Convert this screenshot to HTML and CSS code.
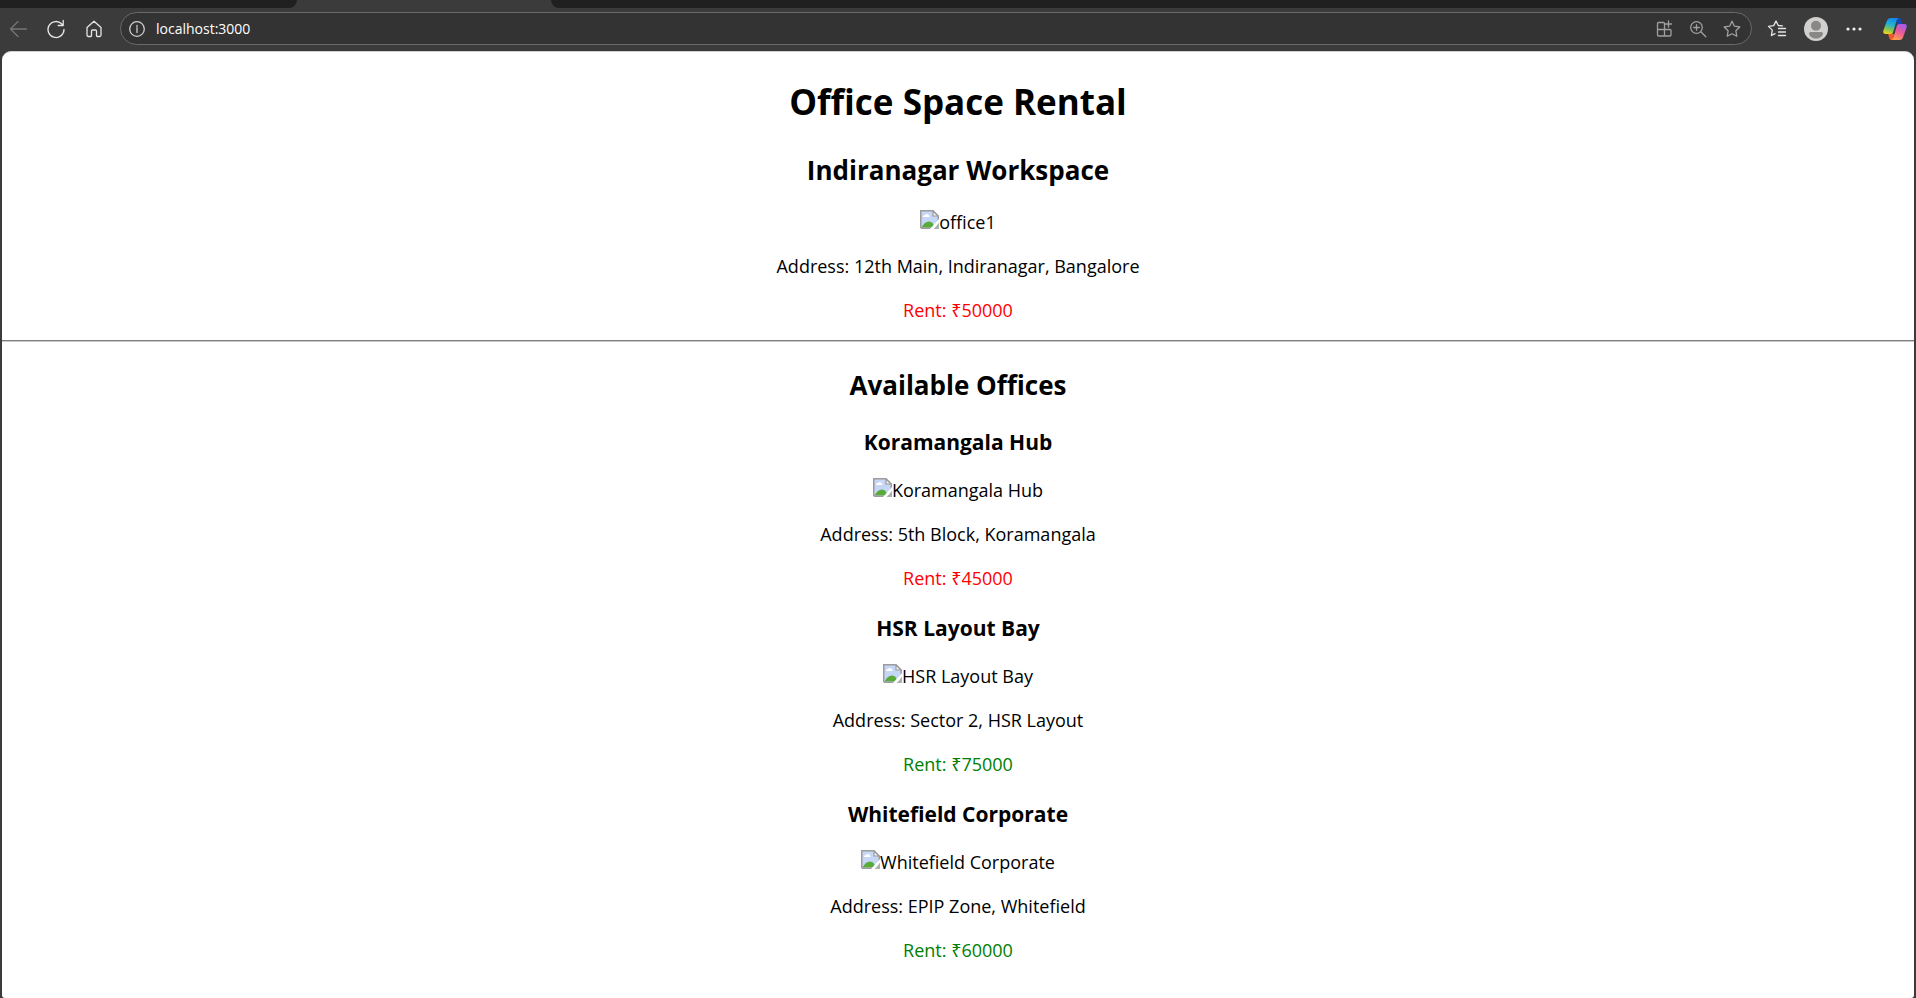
FILE: index.html
```html
<!DOCTYPE html>
<html lang="en">
<head>
<meta charset="utf-8">
<title>Office Space Rental</title>
<link rel="stylesheet" href="styles.css">
</head>
<body>
<svg width="0" height="0" class="defs" aria-hidden="true">
  <symbol id="broken" viewBox="0 0 19 19">
    <path d="M1 1h12l5 5v12H1z" fill="#c6d6f6"/>
    <path d="M3 6.500a2 2 0 0 1 2-1.500a2.300 2.300 0 0 1 4 .5a1.500 1.500 0 0 1 .5 1.500H3z" fill="#fff"/>
    <path d="M1.500 17.500c2-4 4.500-6 7.500-6s4.500 2 5.500 6z" fill="#57ab38"/>
    <path d="M.75 18V.75H13l5.250 5.250V18.250H.75" fill="none" stroke="#9c9c9c" stroke-width="1.500"/>
    <path d="M13 1v5h5z" fill="#f4f4f4" stroke="#9c9c9c" stroke-width="1.200"/>
    <path d="M19.500 8.500v4l-6 7H9.500z" fill="#fff"/>
    <path d="M19 13v6h-5z" fill="#a8b4a8"/>
  </symbol>
</svg>
<header class="browser">
  <div class="tabs"><div class="tab-side tab-left"></div><div class="tab-active"></div><div class="tab-side tab-right"></div></div>
  <nav class="toolbar" aria-label="Browser">
    <button class="tool dim" aria-label="Back"><svg width="20" height="20" viewBox="0 0 20 20"><path d="M18.500 10H2.500M10 2.500L2.500 10l7.500 7.500"/></svg></button>
    <button class="tool" aria-label="Refresh"><svg width="20" height="20" viewBox="0 0 20 20"><path d="M18 10.500A8 8 0 1 1 15.800 5L17 6.200M17.200 1.500v5h-5"/></svg></button>
    <button class="tool" aria-label="Home"><svg width="20" height="20" viewBox="0 0 20 20"><path d="M3 8.500L10 2.200l7 6.300V16q0 1.500-1.500 1.500h-2.200q-.8 0-.8-.8V12q0-1-1-1h-3q-1 0-1 1v4.700q0 .8-.8.8H4.500Q3 17.500 3 16z"/></svg></button>
    <form class="address">
      <button type="button" class="tool info" aria-label="Site information"><svg width="18" height="18" viewBox="0 0 18 18"><circle cx="9" cy="9" r="7.300"/><path d="M9 8v4.500M9 5.300v1.400"/></svg></button>
      <input class="url" type="text" aria-label="Address" value="localhost:3000">
      <button type="button" class="tool muted" aria-label="Apps"><svg width="18" height="18" viewBox="0 0 18 18"><path d="M8.500 2.500H3.500q-1 0-1 1V15q0 1 1 1H15q1 0 1-1v-4.500q0-1-1-1H2.500M8.500 2.500q1 0 1 1V16M13.500 1v6M10.500 4h6"/></svg></button>
      <button type="button" class="tool muted" aria-label="Zoom"><svg width="18" height="18" viewBox="0 0 18 18"><circle cx="7.500" cy="7.500" r="5.800"/><path d="M11.800 11.800L16.800 16.800M7.500 4.700v5.600M4.700 7.500h5.600"/></svg></button>
      <button type="button" class="tool muted" aria-label="Add to favorites"><svg width="18" height="18" viewBox="0 0 18 18"><path d="M9 1.200l2.400 5 5.400.8-3.900 3.800.9 5.500L9 13.700l-4.800 2.600.9-5.500L1.200 7l5.400-.8z"/></svg></button>
    </form>
    <div class="actions">
      <button class="tool" aria-label="Favorites"><svg width="20" height="20" viewBox="0 0 20 20"><path d="M15.500 6.800l-4.200-.3L9 2 6.700 6.600l-5.200.8 3.800 3.700-.9 5.400 3.600-1.900M11.500 9.500h7M11.500 13h7M11.500 16.500h7"/></svg></button>
      <button class="tool" aria-label="Profile"><svg class="plain" width="24" height="24" viewBox="0 0 24 24"><circle cx="12" cy="12" r="12" fill="#d2d0ce"/><circle cx="12" cy="8.800" r="5" fill="#8a8886"/><path d="M5 16.500q0-1.500 1.500-1.500h11q1.500 0 1.500 1.500c-.5 3.500-3.500 5-7 5s-6.500-1.500-7-5z" fill="#8a8886"/></svg></button>
      <button class="tool" aria-label="More"><svg class="plain" width="18" height="18" viewBox="0 0 18 18" fill="#eee"><circle cx="3" cy="9" r="1.600"/><circle cx="9" cy="9" r="1.600"/><circle cx="15" cy="9" r="1.600"/></svg></button>
      <button class="tool copilot" aria-label="Copilot"><svg class="plain" width="24" height="24" viewBox="0 0 24 24">
        <defs>
          <linearGradient id="ca" x1="0.600" y1="0" x2="0.300" y2="1"><stop offset="0" stop-color="#1686e8"/><stop offset=".4" stop-color="#20b0d8"/><stop offset=".7" stop-color="#7cc45a"/><stop offset="1" stop-color="#f0d020"/></linearGradient>
          <linearGradient id="cb" x1="0.700" y1="0" x2="0.300" y2="1"><stop offset="0" stop-color="#a45be8"/><stop offset=".5" stop-color="#ee5a98"/><stop offset="1" stop-color="#ffa050"/></linearGradient>
        </defs>
        <path d="M13 1h3q1.500 0 2 1.500L19.500 7H14z" fill="#1746b8"/>
        <path d="M5 17h6l-1 6H8.500Q7 23 6.500 21.500z" fill="#f0592b"/>
        <path d="M7.500 1H16q-1.500 0-2.200 2L10 15.500Q9.500 17 8 17H2.500Q-.5 17 .4 13.500L4 3.500Q5 1 7.500 1z" fill="url(#ca)"/>
        <path d="M16.500 23H8q1.500 0 2.200-2L14 8.500Q14.500 7 16 7h5.500q3 0 2.100 3.500L20 20.500Q19 23 16.500 23z" fill="url(#cb)"/>
      </svg></button>
    </div>
  </nav>
</header>
<main class="page">
  <h1>Office Space Rental</h1>
  <section class="office">
    <h2>Indiranagar Workspace</h2>
    <div class="photo"><svg width="19" height="19" aria-hidden="true"><use href="#broken"/></svg>office1</div>
    <p>Address: 12th Main, Indiranagar, Bangalore</p>
    <p class="low">Rent: ₹50000</p>
  </section>
  <hr>
  <h2>Available Offices</h2>
  <section class="office">
    <h3>Koramangala Hub</h3>
    <div class="photo"><svg width="19" height="19" aria-hidden="true"><use href="#broken"/></svg>Koramangala Hub</div>
    <p>Address: 5th Block, Koramangala</p>
    <p class="low">Rent: ₹45000</p>
  </section>
  <section class="office">
    <h3>HSR Layout Bay</h3>
    <div class="photo"><svg width="19" height="19" aria-hidden="true"><use href="#broken"/></svg>HSR Layout Bay</div>
    <p>Address: Sector 2, HSR Layout</p>
    <p class="high">Rent: ₹75000</p>
  </section>
  <section class="office">
    <h3>Whitefield Corporate</h3>
    <div class="photo"><svg width="19" height="19" aria-hidden="true"><use href="#broken"/></svg>Whitefield Corporate</div>
    <p>Address: EPIP Zone, Whitefield</p>
    <p class="high">Rent: ₹60000</p>
  </section>
</main>
</body>
</html>
```
FILE: styles.css
```css
* { box-sizing: border-box; }
body {
  margin: 0;
  min-height: 100vh;
  display: flex;
  flex-direction: column;
  background: #3b3b3b;
  font-family: "Open Sans", "Noto Sans", sans-serif;
}
.defs { display: none; }

.tabs { display: flex; height: 8px; background: #3b3b3b; }
.tab-side { background: #202020; }
.tab-left { width: 297px; border-bottom-right-radius: 8px; }
.tab-active { width: 254px; }
.tab-right { flex: 1; border-bottom-left-radius: 8px; }

.toolbar { display: flex; align-items: center; height: 43px; padding: 0 9px 2px 8px; gap: 18px; }
.tool {
  display: flex;
  padding: 0;
  border: 0;
  background: none;
  color: #e6e6e6;
}
.tool svg { fill: none; stroke: currentColor; stroke-width: 1.3; stroke-linejoin: round; stroke-linecap: round; }
.tool svg.plain { fill: #eee; stroke: none; }
.dim { color: #757575; }
.muted { color: #a0a0a0; }
.info { color: #cfcfcf; }
.address {
  flex: 1;
  display: flex;
  align-items: center;
  gap: 16px;
  height: 33px;
  margin: 0 -3px 0 -2px;
  padding: 0 10px 0 7px;
  border: 1px solid #6a6a6a;
  border-radius: 17px;
  background: #333;
}
.url {
  flex: 1;
  min-width: 0;
  margin: 0 0 0 -6px;
  padding: 0;
  border: 0;
  background: none;
  color: #fff;
  font: 14px/20px "Open Sans", "Noto Sans", sans-serif;
}
.actions { display: flex; align-items: center; gap: 17px; }
.copilot { margin-left: 3px; }

.page {
  flex: 1;
  margin: 0 2px;
  padding: 25px 0 20px;
  border-top: 1px solid #d0d0d0;
  border-radius: 9px 9px 3px 3px;
  background: #fff;
  color: #000;
  text-align: center;
  font-size: 18px;
  line-height: 24px;
}
h1 { margin: 0 0 24px; font-size: 35px; line-height: 50px; }
h2 { margin: 0 0 21px; font-size: 26px; line-height: 38px; }
h3 { margin: 23px 0 21px; font-size: 21px; line-height: 30px; }
p { margin: 20px 0 0; }
hr { margin: 18px 0 24px; border: 0; border-top: 1px solid #808080; border-bottom: 1px solid #c8c8c8; }
.photo svg { vertical-align: baseline; }
.low { color: #f00; }
.high { color: #008000; }
```
